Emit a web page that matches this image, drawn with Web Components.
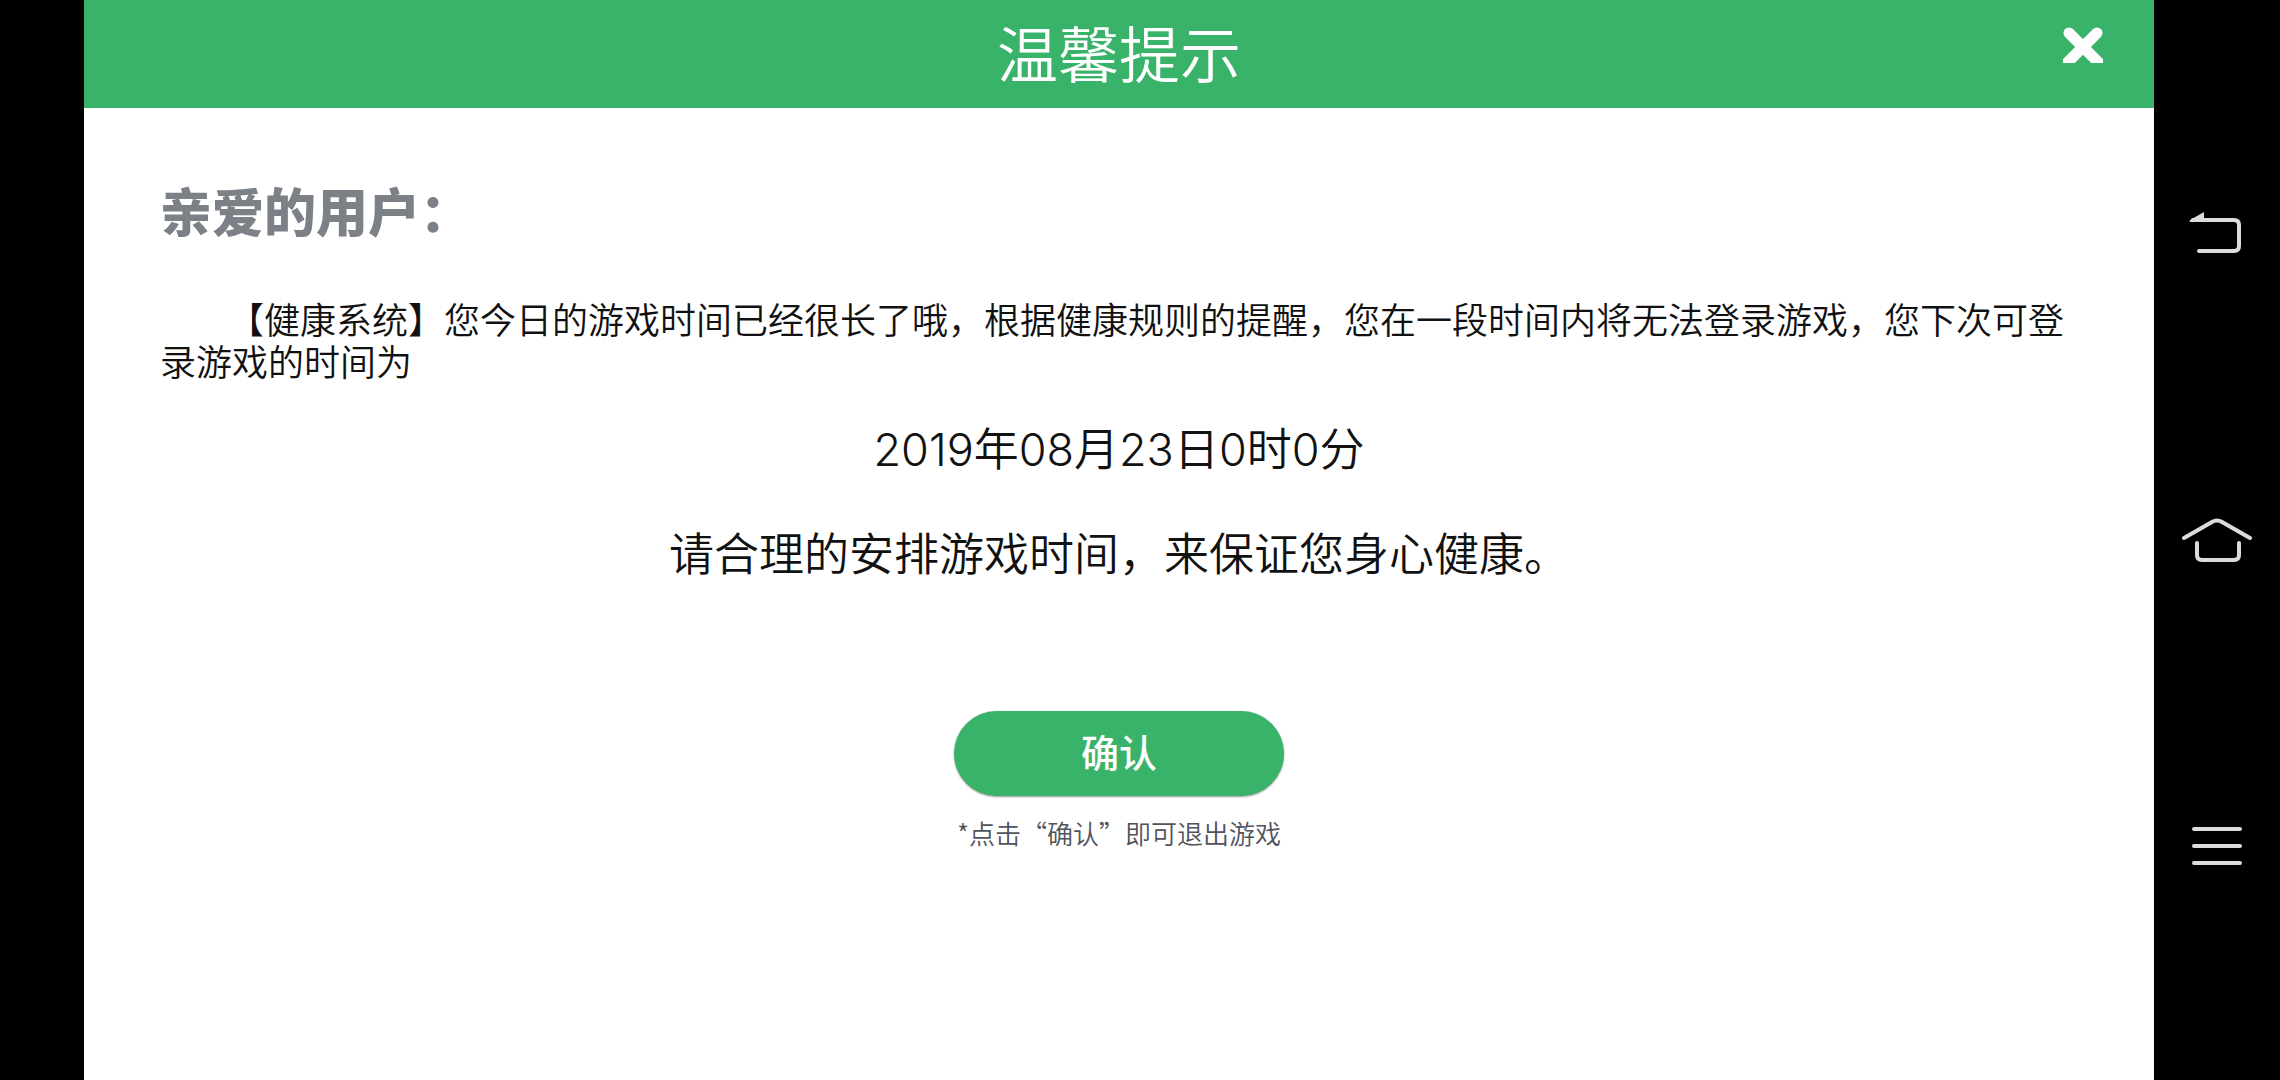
<!DOCTYPE html>
<html lang="zh-CN">
<head>
<meta charset="utf-8">
<meta name="viewport" content="width=device-width, initial-scale=1">
<title>温馨提示</title>
<style>
html, body { margin: 0; background: #000; }
body { font-family: "Noto Sans CJK SC", sans-serif; color: #111; }
</style>
</head>
<body>
<game-screen>
  <notice-dialog heading="温馨提示">
    <notice-letter>
      <span slot="greeting">亲爱的用户：</span>
      <span slot="message">【健康系统】您今日的游戏时间已经很长了哦，根据健康规则的提醒，您在一段时间内将无法登录游戏，您下次可登录游戏的时间为</span>
      <span slot="time">2019年08月23日0时0分</span>
      <span slot="advice">请合理的安排游戏时间，来保证您身心健康。</span>
    </notice-letter>
    <confirm-action note="*点击“确认”即可退出游戏">确认</confirm-action>
  </notice-dialog>
  <system-nav slot="nav"></system-nav>
</game-screen>
<script>
class BaseElement extends HTMLElement {
  constructor() {
    super();
    this.attachShadow({ mode: "open" }).innerHTML = this.constructor.markup;
  }
}

customElements.define("game-screen", class extends BaseElement {
  static markup = `
    <style>
      :host { display: flex; min-height: 100vh; padding-left: 84px; box-sizing: border-box; background: #000; }
      main { flex: 1; display: flex; background: #fff; }
    </style>
    <main><slot></slot></main>
    <slot name="nav"></slot>`;
});

customElements.define("notice-dialog", class extends BaseElement {
  static markup = `
    <style>
      :host { display: flex; flex-direction: column; flex: 1; }
      header { display: grid; grid-template-columns: 1fr auto 1fr; height: 108px; background: #39b36a; color: #fff; }
      h1 { grid-column: 2; margin: 0; font-size: 61px; line-height: 104px; font-weight: 350; }
      button { justify-self: end; align-self: start; margin: 19px 43px 0 0; padding: 8px; border: 0; background: none; cursor: pointer; }
      svg { display: block; }
      section { padding: 72px 76px 40px; }
    </style>
    <header>
      <h1></h1>
      <button type="button" aria-label="关闭">
        <svg width="40" height="36" viewBox="0 0 40 36"><path d="M6 6 36 36M34 6 4 36" stroke="#fff" stroke-width="11" stroke-linecap="round"/></svg>
      </button>
    </header>
    <section><slot></slot></section>`;
  connectedCallback() {
    this.shadowRoot.querySelector("h1").textContent = this.getAttribute("heading");
  }
});

customElements.define("notice-letter", class extends BaseElement {
  static markup = `
    <style>
      :host { display: block; }
      h2, p { margin: 0; }
      h2 { font-size: 52px; line-height: 60px; font-weight: 900; color: #7c8188; }
      .message { margin-top: 57px; font-size: 36px; line-height: 42px; font-weight: 350; text-indent: 68px; }
      .time, .advice { font-size: 45px; line-height: 64px; font-weight: 350; text-align: center; }
      .time { margin-top: 37px; font-family: Inter, "Noto Sans CJK SC", sans-serif; }
      .advice { margin-top: 38px; }
    </style>
    <h2><slot name="greeting"></slot></h2>
    <p class="message"><slot name="message"></slot></p>
    <p class="time"><slot name="time"></slot></p>
    <p class="advice"><slot name="advice"></slot></p>`;
});

customElements.define("confirm-action", class extends BaseElement {
  static markup = `
    <style>
      :host { display: flex; flex-direction: column; align-items: center; gap: 19px; margin-top: 127px; }
      button { width: 330px; height: 85px; padding: 0; border: 0; border-radius: 43px; background: #39b36a; color: #fff; font: 500 38px/80px "Noto Sans CJK SC", sans-serif; box-shadow: 0 1px 2px #999; cursor: pointer; }
      button slot { display: block; height: 85px; }
      p { margin: 0; font-size: 26px; line-height: 36px; font-weight: 350; color: #50535e; }
    </style>
    <button type="button"><slot></slot></button>
    <p></p>`;
  connectedCallback() {
    this.shadowRoot.querySelector("p").textContent = this.getAttribute("note");
  }
});

customElements.define("system-nav", class extends BaseElement {
  static markup = `
    <style>
      :host { display: block; width: 126px; }
      nav { display: flex; flex-direction: column; height: 100%; padding: 83px 0 82px; box-sizing: border-box; }
      button { flex: 1; display: flex; align-items: center; justify-content: center; padding: 0; border: 0; background: none; cursor: pointer; }
      svg { fill: none; stroke: #dcdcdc; stroke-width: 4; stroke-linecap: round; }
    </style>
    <nav aria-label="系统导航">
      <button type="button" aria-label="返回">
        <svg width="72" height="48" viewBox="0 0 72 48"><path d="M12 8H53Q58 8 58 13V34Q58 39 53 39H18"/><path d="M9 8 23 0V10H10Q8 10 9 8Z" fill="#dcdcdc" stroke="none"/></svg>
      </button>
      <button type="button" aria-label="主页">
        <svg width="72" height="48" viewBox="0 0 72 48"><path d="M3 21 31 5Q36 2 41 5L69 21M16 26V38Q16 43 21 43H53Q58 43 58 38V26"/></svg>
      </button>
      <button type="button" aria-label="菜单">
        <svg width="72" height="48" viewBox="0 0 72 48"><path d="M13 7H59M13 24H59M13 41H59"/></svg>
      </button>
    </nav>`;
});
</script>
</body>
</html>
